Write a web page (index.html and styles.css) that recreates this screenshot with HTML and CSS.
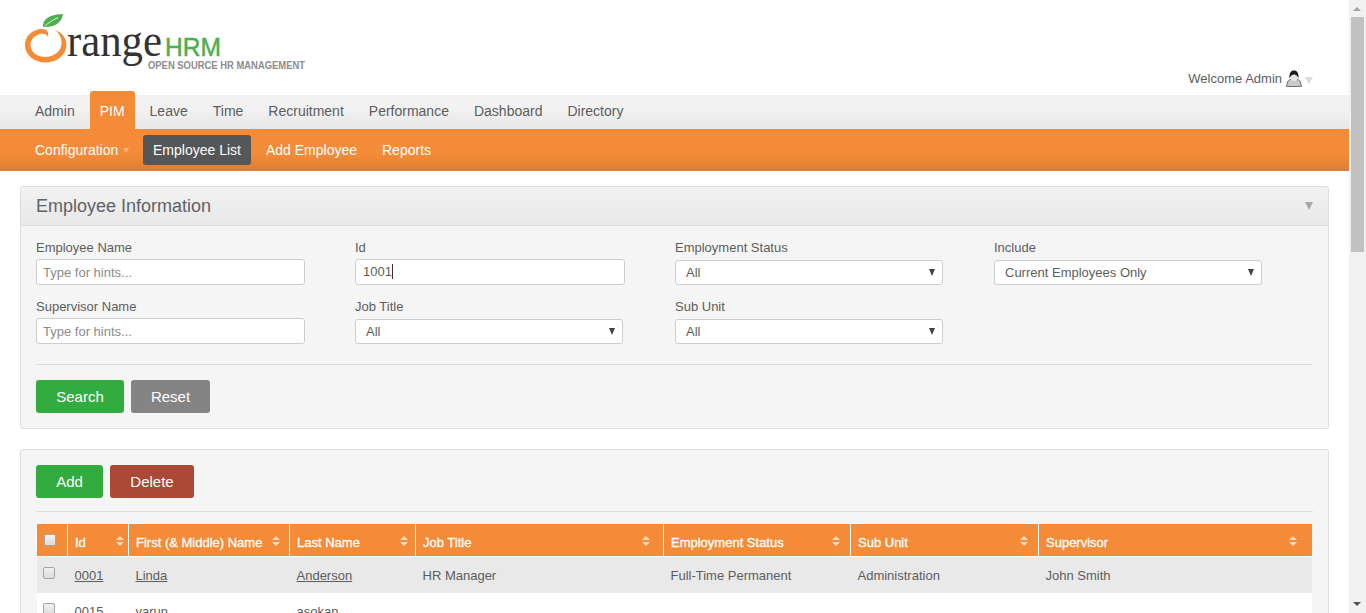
FILE: index.html
```html
<!DOCTYPE html>
<html>
<head>
    <meta charset="utf-8">
    <title>OrangeHRM</title>
    <link rel="stylesheet" href="styles.css">
</head>
<body>
<div class="window">
  <div class="page">
    <div class="header">
      <svg class="logo" width="330" height="95" viewBox="0 0 330 95">
        <path fill="#f48b37" d="M55 30 C63 33 67 39 66.500 46 C65.500 56 56 62.500 45.500 62.500 C33.500 62.500 25 54.500 25 45 C25 35 34 28.500 43 29 C47 29.300 49 32 48 37 C46 33 43 33.500 40 34 C34 35.500 30.500 40 30.500 45 C30.500 52 37 57 45 57 C54 57 61 51 61.500 44 C62 38 59 33 55 30 Z"/>
        <path fill="#4fae4e" d="M43 27 C42 19 51 14 63 14 C62 22 55 28 43 27 Z"/>
        <path fill="none" stroke="#fff" stroke-width="0.800" d="M44.500 26.500 C48 23 53 20 58 17.500"/>
        <text class="logo-range" x="67" y="56" textLength="95" lengthAdjust="spacingAndGlyphs">range</text>
        <text class="logo-hrm" x="165" y="56" textLength="56" lengthAdjust="spacingAndGlyphs">HRM</text>
        <text class="logo-tag" x="148" y="69" textLength="157" lengthAdjust="spacingAndGlyphs">OPEN SOURCE HR MANAGEMENT</text>
      </svg>
      <div class="welcome">
        <span>Welcome Admin</span>
        <svg class="user-icon" width="16" height="17" viewBox="0 0 16 17">
          <path fill="#c9c9c9" stroke="#6f6f6f" stroke-width="1" d="M0.500 16.500 L1.500 12 C2 10.500 4 9.500 5.500 9 L10.500 9 C12 9.500 14 10.500 14.500 12 L15.500 16.500 Z"/>
          <ellipse cx="8" cy="7" rx="3.500" ry="4" fill="#e6e6e6"/>
          <path fill="#1c1c1c" d="M3.500 8.500 C3 3 5 0.500 8 0.500 C11 0.500 13 3 12.500 8.500 C11.500 6 10 4.500 8 4.500 C6 4.500 4.500 6 3.500 8.500 Z"/>
        </svg>
        <span class="welcome-arrow"></span>
      </div>
    </div>

    <ul class="menu">
      <li>Admin</li>
      <li class="active">PIM</li>
      <li>Leave</li>
      <li>Time</li>
      <li>Recruitment</li>
      <li>Performance</li>
      <li>Dashboard</li>
      <li>Directory</li>
    </ul>
    <ul class="submenu">
      <li class="has-arrow">Configuration</li>
      <li class="current">Employee List</li>
      <li>Add Employee</li>
      <li>Reports</li>
    </ul>

    <div class="panel">
      <div class="panel-head">
        <h1>Employee Information</h1>
        <span class="panel-arrow"></span>
      </div>
      <div class="panel-body">
        <div class="filters">
          <div class="field">
            <label>Employee Name</label>
            <input class="input" type="text" placeholder="Type for hints...">
          </div>
          <div class="field">
            <label>Id</label>
            <div class="input input-wide">1001<span class="caret"></span></div>
          </div>
          <div class="field">
            <label>Employment Status</label>
            <div class="select">All</div>
          </div>
          <div class="field">
            <label>Include</label>
            <div class="select">Current Employees Only</div>
          </div>
          <div class="field">
            <label>Supervisor Name</label>
            <input class="input" type="text" placeholder="Type for hints...">
          </div>
          <div class="field">
            <label>Job Title</label>
            <div class="select">All</div>
          </div>
          <div class="field">
            <label>Sub Unit</label>
            <div class="select">All</div>
          </div>
        </div>
        <div class="actions">
          <button class="btn btn-green btn-search">Search</button>
          <button class="btn btn-grey btn-reset">Reset</button>
        </div>
      </div>
    </div>

    <div class="panel panel-list">
      <div class="actions actions-top">
        <button class="btn btn-green btn-add">Add</button>
        <button class="btn btn-red btn-delete">Delete</button>
      </div>
      <table class="list">
        <colgroup>
          <col class="c-check"><col class="c-id"><col class="c-first"><col class="c-last">
          <col class="c-job"><col class="c-status"><col class="c-unit"><col class="c-super">
        </colgroup>
        <thead>
          <tr>
            <th><span class="check check-head"></span></th>
            <th><div class="th-in">Id<span class="sort"></span></div></th>
            <th><div class="th-in">First (&amp; Middle) Name<span class="sort"></span></div></th>
            <th><div class="th-in">Last Name<span class="sort"></span></div></th>
            <th><div class="th-in">Job Title<span class="sort"></span></div></th>
            <th><div class="th-in">Employment Status<span class="sort"></span></div></th>
            <th><div class="th-in">Sub Unit<span class="sort"></span></div></th>
            <th><div class="th-in">Supervisor<span class="sort"></span></div></th>
          </tr>
        </thead>
        <tbody>
          <tr class="odd">
            <td><span class="check"></span></td>
            <td><a href="#">0001</a></td>
            <td><a href="#">Linda</a></td>
            <td><a href="#">Anderson</a></td>
            <td>HR Manager</td>
            <td>Full-Time Permanent</td>
            <td>Administration</td>
            <td>John Smith</td>
          </tr>
          <tr>
            <td><span class="check"></span></td>
            <td><a href="#">0015</a></td>
            <td><a href="#">varun</a></td>
            <td><a href="#">asokan</a></td>
            <td></td>
            <td></td>
            <td></td>
            <td></td>
          </tr>
        </tbody>
      </table>
    </div>
  </div>

  <div class="scrollbar">
    <span class="scroll-up"></span>
    <div class="scroll-thumb"></div>
    <span class="scroll-down"></span>
  </div>
</div>
</body>
</html>
```

FILE: styles.css
```css
html, body {
    margin: 0;
    height: 613px;
    overflow: hidden;
    background: #fff;
}
body {
    font-family: "Liberation Sans", Arial, sans-serif;
    font-size: 13px;
    color: #5d5d5d;
}
.window {
    display: flex;
    height: 613px;
}
.page {
    width: 1349px;
    height: 613px;
    overflow: hidden;
}

/* header and logo */
.header {
    display: flex;
    justify-content: space-between;
    height: 95px;
}
.logo {
    display: block;
    flex: none;
}
.logo-range {
    font-family: "Liberation Serif", serif;
    font-size: 47px;
    fill: #333334;
}
.logo-hrm {
    font-family: "Liberation Sans", sans-serif;
    font-size: 26px;
    fill: #4fae4e;
    stroke: #4fae4e;
    stroke-width: 0.500px;
}
.logo-tag {
    font-family: "Liberation Sans", sans-serif;
    font-size: 10.200px;
    font-weight: bold;
    fill: #8c8c8c;
}
.welcome {
    display: flex;
    align-items: center;
    height: 18px;
    margin: 69px 36px 0 0;
    color: #5d5d5d;
}
.user-icon {
    margin-left: 4px;
}
.welcome-arrow {
    width: 0;
    height: 0;
    margin: 4px 0 0 3px;
    border-top: 7px solid #dcdcdc;
    border-left: 4px solid transparent;
    border-right: 4px solid transparent;
}

/* main menu */
.menu, .submenu {
    display: flex;
    list-style: none;
    margin: 0;
    padding: 0 0 0 25px;
    font-size: 14px;
}
.menu {
    height: 34px;
    background: linear-gradient(#f2f2f2 40%, #e7e7e7);
}
.menu li {
    height: 34px;
    margin-right: 5px;
    padding: 0 10px;
    line-height: 33px;
}
.menu .active {
    height: 38px;
    margin-top: -4px;
    line-height: 41px;
    color: #fff;
    background: #f48b37;
    border-radius: 3px 3px 0 0;
}
.submenu {
    height: 42px;
    align-items: center;
    background: linear-gradient(#f48b38 60%, #dc7e34);
}
.submenu li {
    height: 30px;
    margin-right: 5px;
    padding: 0 10px;
    line-height: 30px;
    color: #fff;
    border-radius: 3px;
}
.submenu .current {
    background: #555657;
}
.submenu .has-arrow {
    width: 93px;
    white-space: nowrap;
}
.has-arrow::after {
    content: "";
    display: inline-block;
    margin: 0 0 2px 5px;
    border-top: 5px solid #f5b88a;
    border-left: 3px solid transparent;
    border-right: 3px solid transparent;
}

/* panels */
.panel {
    margin: 15px 20px 20px;
    background: #f5f5f5;
    border: 1px solid #dedede;
    border-radius: 3px;
}
.panel-list {
    padding: 15px;
    margin-top: 0;
}
.panel-head {
    display: flex;
    justify-content: space-between;
    align-items: center;
    height: 38px;
    padding: 0 15px;
    background: linear-gradient(#f2f2f2, #e8e8e8);
    border-bottom: 1px solid #dedede;
    border-radius: 3px 3px 0 0;
}
.panel-head h1 {
    margin: 0;
    font-size: 18px;
    font-weight: normal;
    color: #5f6266;
}
.panel-arrow {
    width: 0;
    height: 0;
    margin-top: -1px;
    border-top: 8px solid #a9a9a9;
    border-left: 4px solid transparent;
    border-right: 4px solid transparent;
}
.panel-body {
    padding: 13px 15px 15px;
}

/* filter form */
.filters {
    display: grid;
    grid-template-columns: 319px 320px 319px 269px;
    row-gap: 13px;
    padding-bottom: 20px;
    border-bottom: 1px solid #dedede;
}
.field label {
    display: block;
    height: 17px;
    margin-bottom: 4px;
    line-height: 18px;
}
.input, .select {
    display: block;
    box-sizing: border-box;
    height: 25px;
    padding: 0 6px;
    font: 13px/23px "Liberation Sans", Arial, sans-serif;
    color: #5d5d5d;
    background: #fff;
    border: 1px solid #cdcdcd;
    border-radius: 3px;
}
.input {
    width: 269px;
    margin-top: -1px;
    height: 26px;
    line-height: 24px;
}
.input-wide {
    width: 270px;
    padding-left: 7px;
}
.input::placeholder {
    color: #8a8a8a;
    opacity: 1;
}
.caret {
    display: inline-block;
    width: 1px;
    height: 15px;
    vertical-align: -3px;
    background: #333;
}
.select {
    position: relative;
    width: 268px;
    padding-left: 10px;
}
.select::after {
    content: "";
    position: absolute;
    top: 8px;
    right: 7px;
    border-top: 7px solid #444;
    border-left: 3px solid transparent;
    border-right: 3px solid transparent;
}

/* buttons */
.actions {
    display: flex;
    gap: 7px;
    padding-top: 15px;
}
.actions-top {
    padding: 0 0 13px;
    border-bottom: 1px solid #dedede;
}
.btn {
    height: 33px;
    padding: 0;
    font: 15px "Liberation Sans", Arial, sans-serif;
    color: #fff;
    border: 0;
    border-radius: 3px;
}
.btn-green {
    background: #33ac3f;
}
.btn-grey {
    background: #848484;
}
.btn-red {
    background: #aa4935;
}
.btn-search {
    width: 88px;
}
.btn-reset {
    width: 79px;
}
.btn-add {
    width: 67px;
}
.btn-delete {
    width: 84px;
}

/* employee table */
.list {
    width: 1275px;
    margin-top: 12px;
    border-collapse: collapse;
    table-layout: fixed;
}
.c-check { width: 31px; }
.c-id { width: 61px; }
.c-first { width: 161px; }
.c-last { width: 126px; }
.c-job { width: 248px; }
.c-status { width: 187px; }
.c-unit { width: 188px; }
.c-super { width: 273px; }
.list th {
    height: 32px;
    padding: 0 0 0 7px;
    font-weight: normal;
    text-align: left;
    color: #fff;
    -webkit-text-stroke: 0.300px #fff;
    background: #f48b38;
    border-left: 1px solid #fff;
    border-bottom: 1px solid #fff;
}
.th-in {
    display: flex;
    justify-content: space-between;
    align-items: center;
    padding: 4px calc(5% + 1px) 0 0;
}
.sort {
    display: flex;
    flex-direction: column;
    gap: 2px;
    margin-top: -3px;
}
.sort::before, .sort::after {
    content: "";
    border-left: 4px solid transparent;
    border-right: 4px solid transparent;
}
.sort::before {
    border-bottom: 4px solid #fbdcc2;
}
.sort::after {
    border-top: 4px solid #fbdcc2;
}
.list td {
    height: 36px;
    padding: 0 6px 0 7px;
    background: #fff;
}
.list .odd td {
    background: #e9e9e9;
}
.list a {
    color: #5d5d5d;
}
.check {
    display: block;
    box-sizing: border-box;
    width: 12px;
    height: 12px;
    background: linear-gradient(#f2f2f2, #dcdcdc);
    border: 1px solid #a5a5a5;
    border-radius: 2px;
}
.check-head {
    margin: -1px 0 0 0;
}
.list td .check {
    margin: -4px 0 0 -1px;
}

/* scrollbar strip */
.scrollbar {
    position: relative;
    width: 17px;
    height: 613px;
    background: #f1f1f1;
}
.scroll-up, .scroll-down {
    position: absolute;
    left: 4px;
    border-left: 4px solid transparent;
    border-right: 4px solid transparent;
}
.scroll-up {
    top: 7px;
    border-bottom: 4px solid #a3a3a3;
}
.scroll-down {
    bottom: 7px;
    border-top: 4px solid #505050;
}
.scroll-thumb {
    position: absolute;
    top: 17px;
    left: 2px;
    width: 13px;
    height: 235px;
    background: #c1c1c1;
}
```
